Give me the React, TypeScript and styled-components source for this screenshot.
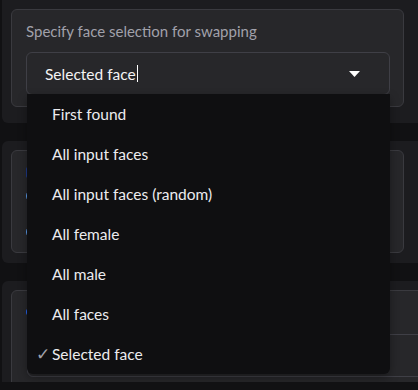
import React from 'react';
import styled, { createGlobalStyle } from 'styled-components';

const GlobalStyle = createGlobalStyle`
  html, body {
    margin: 0;
    padding: 0;
    background: #111113;
    overflow: hidden;
  }
  body {
    font-family: 'Lato', 'Noto Sans', sans-serif;
    -webkit-font-smoothing: antialiased;
  }
`;

const Page = styled.div`
  width: 418px;
  height: 390px;
  overflow: hidden;
  display: flex;
  flex-direction: column;
  gap: 18px;
  padding-left: 2px;
  margin-top: -8px;
`;

const Group = styled.div<{ $top: number; $bottom: number }>`
  width: 440px;
  background: #1c1c1f;
  border-radius: 6px;
  padding: ${p => p.$top}px 0 ${p => p.$bottom}px 9px;
  box-sizing: border-box;
`;

const Block = styled.div<{ $wide?: boolean }>`
  position: relative;
  width: ${p => (p.$wide ? '460px' : '393px')};
  box-sizing: border-box;
  background: #27272a;
  border: 1px solid #3a3a3f;
  border-radius: 6px;
  padding: 11px 13px 11px 14px;
`;

const Label = styled.div`
  font-size: 15px;
  line-height: 20px;
  color: #a1a1aa;
  margin-bottom: 11px;
`;

const SelectWrap = styled.div`
  position: relative;
`;

const SelectBox = styled.div`
  height: 43px;
  box-sizing: border-box;
  border: 1px solid #3f3f46;
  border-radius: 6px;
  background: #27272a;
  display: flex;
  align-items: center;
  padding: 0 29px 0 18px;
  color: #f4f4f5;
  font-size: 15.5px;
`;

const Value = styled.span`
  flex: 1;
  display: flex;
  align-items: center;
`;

const Caret = styled.span`
  display: inline-block;
  width: 1px;
  height: 17px;
  background: #ffffff;
  margin-left: 1px;
`;

const Arrow = styled.svg`
  width: 11px;
  height: 6px;
  fill: #ffffff;
`;

const Menu = styled.ul`
  position: absolute;
  left: 1px;
  right: 0;
  top: 42px;
  margin: 0;
  padding: 0;
  list-style: none;
  background: #0f0f11;
  border-radius: 0 0 6px 6px;
  box-shadow: 0 4px 10px rgba(0, 0, 0, 0.35);
  z-index: 10;
`;

const Item = styled.li`
  position: relative;
  height: 40px;
  display: flex;
  align-items: center;
  padding-left: 25px;
  color: #ececef;
  font-size: 15.5px;
`;

const Check = styled.span`
  position: absolute;
  left: 9px;
  color: #a1a1aa;
  font-size: 17px;
  font-family: 'DejaVu Sans', sans-serif;
`;

const Title = styled.span<{ $color: string; $h: number; $top: number }>`
  display: block;
  width: 60px;
  height: ${p => p.$h}px;
  margin-top: ${p => p.$top}px;
  background: ${p => p.$color};
  border-radius: 2px;
`;

const Options = styled.div`
  display: flex;
  flex-direction: column;
  gap: 22px;
  padding: 11px 0 2px;
`;

const Radio = styled.span`
  display: block;
  width: 14px;
  height: 14px;
  border: 1.5px solid #60a5fa;
  border-radius: 50%;
  box-sizing: border-box;
`;

const TextInput = styled.div`
  margin-top: 19px;
  margin-left: 1px;
  height: 43px;
  border: 1px solid #3f3f46;
  border-radius: 6px;
  box-sizing: border-box;
`;

const options = [
  'First found',
  'All input faces',
  'All input faces (random)',
  'All female',
  'All male',
  'All faces',
  'Selected face',
];

const App: React.FC = () => {
  const selected = 'Selected face';

  return (
    <>
      <GlobalStyle />
      <Page>
        <Group $top={17} $bottom={16}>
          <Block>
            <Label>Specify face selection for swapping</Label>
            <SelectWrap>
              <SelectBox>
                <Value>
                  {selected}
                  <Caret />
                </Value>
                <Arrow viewBox="0 0 11 6">
                  <path d="M0 0 H11 L5.5 6 Z" />
                </Arrow>
              </SelectBox>
              <Menu>
                {options.map(opt => (
                  <Item key={opt}>
                    {opt === selected && <Check>✓</Check>}
                    {opt}
                  </Item>
                ))}
              </Menu>
            </SelectWrap>
          </Block>
        </Group>

        <Group $top={9} $bottom={10}>
          <Block>
            <Title $color="#1e3a8a" $h={11} $top={5} />
            <Options>
              <Radio />
              <Radio />
            </Options>
          </Block>
        </Group>

        <Group $top={9} $bottom={10}>
          <Block $wide>
            <Title $color="#2563eb" $h={6} $top={7} />
            <TextInput />
          </Block>
        </Group>
      </Page>
    </>
  );
};

export default App;
